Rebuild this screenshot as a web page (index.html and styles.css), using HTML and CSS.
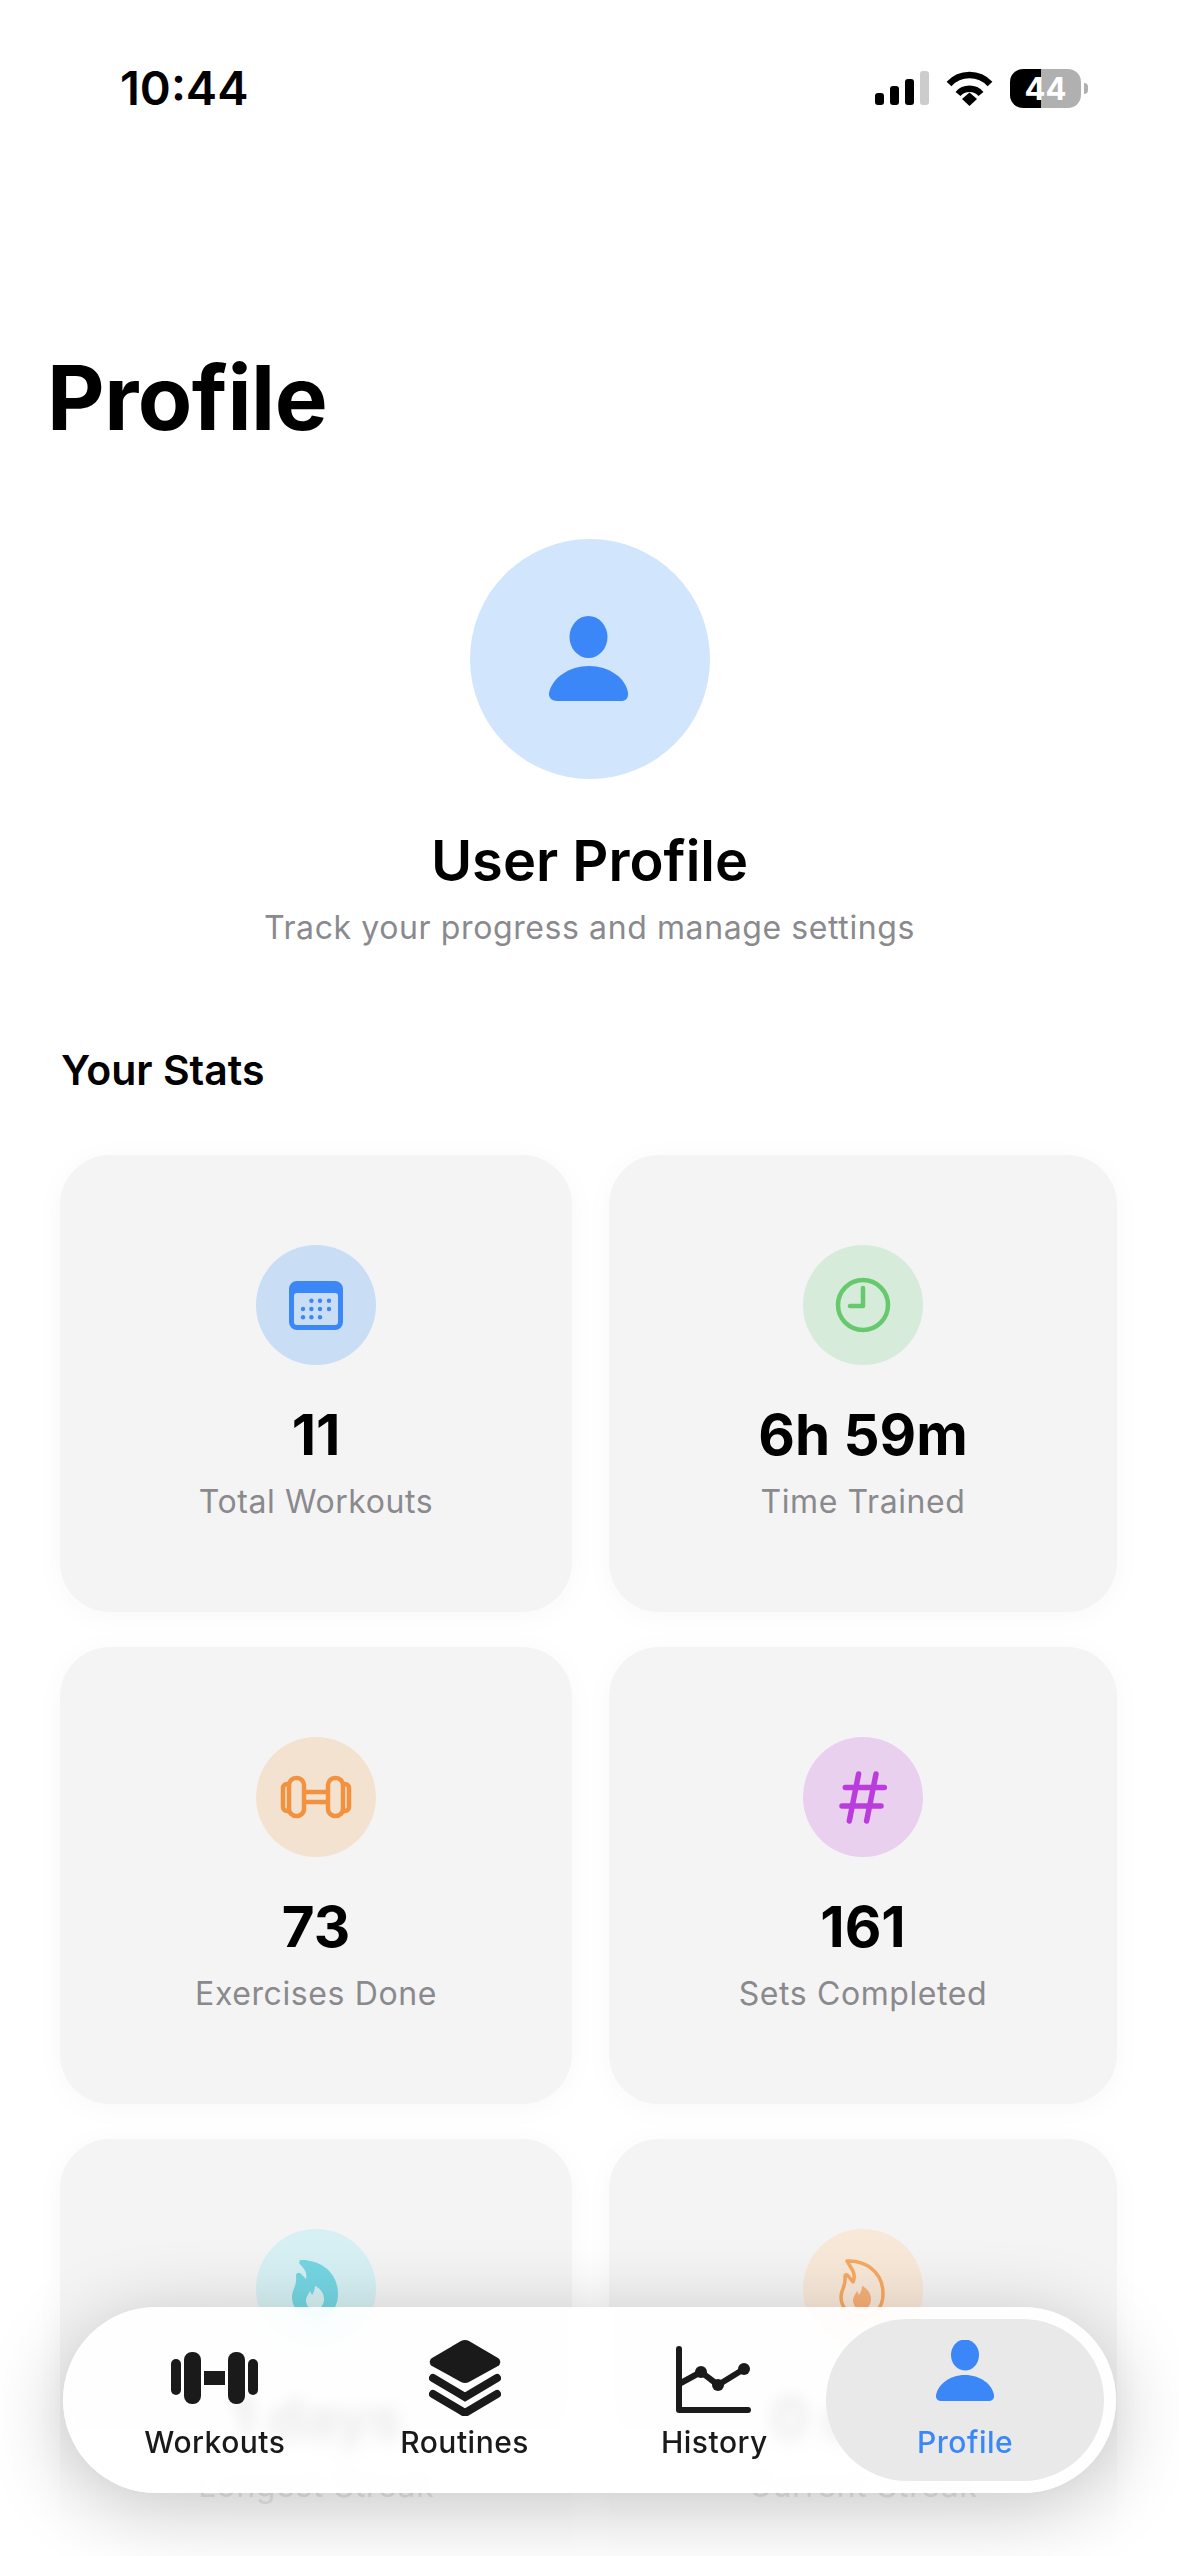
FILE: index.html
```html
<!doctype html>
<html>

<head>
    <title>Profile</title>
    <meta charset="utf-8" />
    <meta name="viewport" content="width=device-width, initial-scale=1.0">
    <link rel="stylesheet" href="styles.css">
</head>

<body>
    <div id="screen">
        <div class="status-bar">
            <span class="time">10:44</span>
            <div class="status-icons">
                <svg class="signal" width="54" height="34" viewBox="0 0 54 34">
                    <rect x="0" y="22" width="9" height="12" rx="3" />
                    <rect x="15" y="15" width="9" height="19" rx="3" />
                    <rect x="30" y="8" width="9" height="26" rx="3" />
                    <rect class="signal-off" x="45" y="0" width="9" height="34" rx="3" />
                </svg>
                <svg class="wifi" width="47" height="35" viewBox="0 0 47 35">
                    <path d="M3 13 C14 1 33 1 44 13" />
                    <path d="M12 23 C18 16 29 16 35 23" />
                    <polygon points="16,28 23.5,21.5 31,28 23.5,35" />
                </svg>
                <div class="battery"><span>44</span></div>
                <div class="battery-nub"></div>
            </div>
        </div>

        <h1 class="page-title">Profile</h1>

        <div class="profile-head">
            <div class="avatar">
                <svg width="80" height="86" viewBox="0 0 80 86">
                    <ellipse cx="39.5" cy="21" rx="19" ry="21" />
                    <path d="M0 77 C3 62 20 50 40 50 C60 50 77 62 79 77 C79.5 82 77 85 72 85 L8 85 C3 85 -0.5 82 0 77 Z" />
                </svg>
            </div>
            <h2 class="user-name">User Profile</h2>
            <p class="user-sub">Track your progress and manage settings</p>
        </div>

        <h3 class="section-title">Your Stats</h3>

        <div class="stats">
            <div class="card">
                <div class="badge badge-blue">
                    <svg width="120" height="120" viewBox="0 0 120 120">
                        <path fill-rule="evenodd" d="M41 36 H79 A8 8 0 0 1 87 44 V77 A8 8 0 0 1 79 85 H41 A8 8 0 0 1 33 77 V44 A8 8 0 0 1 41 36 Z M41 48 A3 3 0 0 0 38 51 V77 A3 3 0 0 0 41 80 H79 A3 3 0 0 0 82 77 V51 A3 3 0 0 0 79 48 Z" />
                        <circle cx="55.4" cy="55.7" r="2.2" />
                        <circle cx="64" cy="55.7" r="2.2" />
                        <circle cx="73" cy="55.7" r="2.2" />
                        <circle cx="47" cy="64" r="2.2" />
                        <circle cx="55.4" cy="64" r="2.2" />
                        <circle cx="64" cy="64" r="2.2" />
                        <circle cx="73" cy="64" r="2.2" />
                        <circle cx="47" cy="72.3" r="2.2" />
                        <circle cx="55.4" cy="72.3" r="2.2" />
                        <circle cx="64" cy="72.3" r="2.2" />
                    </svg>
                </div>
                <div class="value">11</div>
                <div class="label">Total Workouts</div>
            </div>
            <div class="card">
                <div class="badge badge-green">
                    <svg class="line-icon" width="120" height="120" viewBox="0 0 120 120">
                        <circle cx="60" cy="60" r="25" />
                        <path d="M60 43 V61 H47" />
                    </svg>
                </div>
                <div class="value">6h 59m</div>
                <div class="label">Time Trained</div>
            </div>
            <div class="card">
                <div class="badge badge-orange">
                    <svg class="line-icon" width="120" height="120" viewBox="0 0 120 120">
                        <rect x="33" y="41" width="15" height="38" rx="7" />
                        <rect x="72" y="41" width="15" height="38" rx="7" />
                        <path d="M33 47 H31 A4 4 0 0 0 27 51 V70 A4 4 0 0 0 31 74 H33" />
                        <path d="M87 47 H89 A4 4 0 0 1 93 51 V70 A4 4 0 0 1 89 74 H87" />
                        <path d="M48 55 H72 M48 65 H72" />
                    </svg>
                </div>
                <div class="value">73</div>
                <div class="label">Exercises Done</div>
            </div>
            <div class="card">
                <div class="badge badge-purple">
                    <svg class="line-icon hash" width="120" height="120" viewBox="0 0 120 120">
                        <path d="M55.6 37 L46.3 84 M73 37 L63.6 84 M42.3 50.6 H81.3 M39 69 H78" />
                    </svg>
                </div>
                <div class="value">161</div>
                <div class="label">Sets Completed</div>
            </div>
            <div class="card">
                <div class="badge badge-teal">
                    <svg width="120" height="120" viewBox="0 0 120 120">
                        <path fill-rule="evenodd" d="M44 31 C60 30 82 40 82 65 C82 80 72 90 60 90 C46 90 36 80 36 68 C36 60 41 58 40 47 C40 43 44 43 46 46 L50 50 C52 42 46 38 43 34 Z M59 57 C59 60 58 63 56 66 L54 62 C52 66 50 68 50 71 C50 77 54 81 59 81 C64 81 68 76 68 70 C68 64 64 59 59 57 Z" />
                    </svg>
                </div>
                <div class="value">1 days</div>
                <div class="label">Longest Streak</div>
            </div>
            <div class="card">
                <div class="badge badge-orange badge-streak">
                    <svg width="120" height="120" viewBox="0 0 120 120">
                        <path class="flame-line" d="M44 32 C60 31 80 41 80 65 C80 79 71 88 60 88 C47 88 38 79 38 68 C38 60 43 58 42 48 C42 45 44 45 46 48 L50 53 C54 44 47 38 44 32 Z" />
                        <path class="flame-fill" d="M59 57 C59 60 58 63 56 66 L54 62 C52 66 50 68 50 71 C50 77 54 81 59 81 C64 81 68 76 68 70 C68 64 64 59 59 57 Z" />
                    </svg>
                </div>
                <div class="value">0 days</div>
                <div class="label">Current Streak</div>
            </div>
        </div>

        <div class="fade"></div>

        <nav class="tabs">
            <div class="tab">
                <svg width="87" height="76" viewBox="0 0 87 76">
                    <rect x="0" y="19" width="10" height="36" rx="5" />
                    <rect x="13" y="12" width="17" height="52" rx="8" />
                    <rect x="33" y="31" width="21" height="14" />
                    <rect x="57" y="12" width="17" height="52" rx="8" />
                    <rect x="77" y="19" width="10" height="36" rx="5" />
                </svg>
                <span>Workouts</span>
            </div>
            <div class="tab">
                <svg width="72" height="76" viewBox="0 0 72 76">
                    <path d="M32 1 C34.5 -0.3 37.5 -0.3 40 1 L69 18 C72 20 72 24 69 26 L40 42 C37.5 43.3 34.5 43.3 32 42 L3 26 C0 24 0 20 3 18 Z" />
                    <path class="chevron" d="M4 38 L36 57 L68 38" />
                    <path class="chevron" d="M4 54 L36 73 L68 54" />
                </svg>
                <span>Routines</span>
            </div>
            <div class="tab">
                <svg class="chart" width="76" height="76" viewBox="0 0 76 76">
                    <path d="M3 9 V70 H72" />
                    <path d="M3 44 L25 32 L42 45 L68 29" />
                    <circle cx="25" cy="32" r="6" />
                    <circle cx="42" cy="45" r="6" />
                    <circle cx="68" cy="29" r="6" />
                </svg>
                <span>History</span>
            </div>
            <div class="tab tab-active">
                <svg width="58" height="76" viewBox="0 0 58 76">
                    <ellipse cx="29" cy="15" rx="14" ry="15.5" />
                    <path d="M0 55 C2 44 14 35 29 35 C44 35 56 44 58 55 C58.5 59 56 61 53 61 L5 61 C2 61 -0.5 59 0 55 Z" />
                </svg>
                <span>Profile</span>
            </div>
        </nav>
    </div>
</body>

</html>
```

FILE: styles.css
```css
* { box-sizing: border-box; }
html, body { margin: 0; padding: 0; background-color: #fff; }
body { font-family: Inter, "Noto Sans", sans-serif; color: #000; }
h1, h2, h3, p { margin: 0; font-weight: normal; }

#screen { position: relative; width: 1179px; height: 2556px; overflow: hidden; background-color: #fff; }

/* status bar */
.status-bar { display: flex; justify-content: space-between; align-items: center; height: 176px; padding: 0 91px 0 120px; }
.time { font-size: 47px; font-weight: 600; line-height: 50px; }
.status-icons { display: flex; align-items: center; }
.signal { fill: #000; margin-right: 17px; }
.signal-off { fill: #ccc; }
.wifi { margin-right: 17px; }
.wifi path { fill: none; stroke: #000; stroke-width: 6.5; }
.wifi polygon { fill: #000; }
.battery { display: flex; align-items: center; justify-content: center; width: 71px; height: 39px; border-radius: 13px; background: linear-gradient(to right, #000 44%, #b0b0b0 44%); color: #fff; font-size: 31px; font-weight: 700; line-height: 39px; }
.battery-nub { width: 4px; height: 11px; margin-left: 3px; background-color: #b0b0b0; border-radius: 0 5px 5px 0; }

.page-title { margin: 172px 0 0 47px; font-size: 89px; font-weight: 700; line-height: 100px; letter-spacing: -0.5px; }

/* avatar block */
.profile-head { display: flex; flex-direction: column; align-items: center; margin-top: 91px; }
.avatar { display: flex; align-items: center; justify-content: center; width: 240px; height: 240px; border-radius: 50%; background-color: #d1e5fd; }
.avatar svg { fill: #3b87f8; margin-right: 1px; }
.user-name { margin-top: 47px; font-size: 56px; font-weight: 600; line-height: 70px; }
.user-sub { margin-top: 10px; font-size: 32px; line-height: 44px; letter-spacing: 0.6px; color: #8a8a8e; }

.section-title { margin: 95px 0 0 61px; font-size: 41px; font-weight: 600; line-height: 50px; }

/* stat cards */
.stats { display: grid; grid-template-columns: 512px 508px; gap: 35px 37px; margin: 60px 0 0 60px; }
.card { display: flex; flex-direction: column; align-items: center; height: 457px; padding-top: 90px; border-radius: 50px; background-color: #f4f4f4; box-shadow: 0 4px 30px rgba(0, 0, 0, 0.03); }
.badge { width: 120px; height: 120px; border-radius: 50%; }
.badge svg { display: block; }
.badge-blue { background-color: #c9ddf5; fill: #3b87f8; }
.badge-green { background-color: #d6ebd9; stroke: #66c96e; }
.badge-orange { background-color: #f4e2d1; stroke: #f2923f; }
.badge-purple { background-color: #e8d0ee; stroke: #bb3cdc; }
.badge-teal { background-color: #d6f0f3; fill: #74d6e2; }
.badge-streak { background-color: #f8e8d8; stroke: #f8a860; }
.line-icon * { fill: none; stroke-width: 4.5; stroke-linecap: round; stroke-linejoin: round; }
.hash * { stroke-width: 5.5; }
.flame-line { fill: none; stroke-width: 3.5; stroke-linejoin: round; }
.flame-fill { fill: #f8b078; stroke: none; }
.value { margin-top: 35px; font-size: 56.5px; font-weight: 700; line-height: 70px; }
.label { margin-top: 10px; font-size: 32px; line-height: 44px; letter-spacing: 0.6px; color: #8a8a8e; }

/* fade + floating tab bar */
.fade { position: absolute; left: 0; right: 0; bottom: 0; height: 330px; background: linear-gradient(to bottom, rgba(255, 255, 255, 0) 50%, rgba(255, 255, 255, 0.3) 65%, rgba(255, 255, 255, 0.8) 82%, #fff); }
.tabs { position: absolute; left: 63px; top: 2307px; display: flex; width: 1053px; height: 186px; padding: 12px 12px 12px 27px; border-radius: 93px; background-color: rgba(255, 255, 255, 0.9); box-shadow: 0 14px 80px rgba(0, 0, 0, 0.22); backdrop-filter: blur(8px); }
.tab { display: flex; flex-direction: column; align-items: center; width: 250px; padding-top: 21px; color: #1a1a1a; font-size: 30px; font-weight: 500; line-height: 40px; letter-spacing: 0.5px; }
.tab svg { display: block; fill: #1a1a1a; margin-bottom: 6px; }
.tab .chevron { fill: none; stroke: #1a1a1a; stroke-width: 8; stroke-linecap: round; }
.chart path { fill: none; stroke: #1a1a1a; stroke-width: 6; stroke-linecap: round; stroke-linejoin: round; }
.tab-active { width: 278px; margin-left: -13px; border-radius: 81px; background-color: #e9e9e9; color: #3b87f8; }
.tab-active svg { fill: #3b87f8; }
```
